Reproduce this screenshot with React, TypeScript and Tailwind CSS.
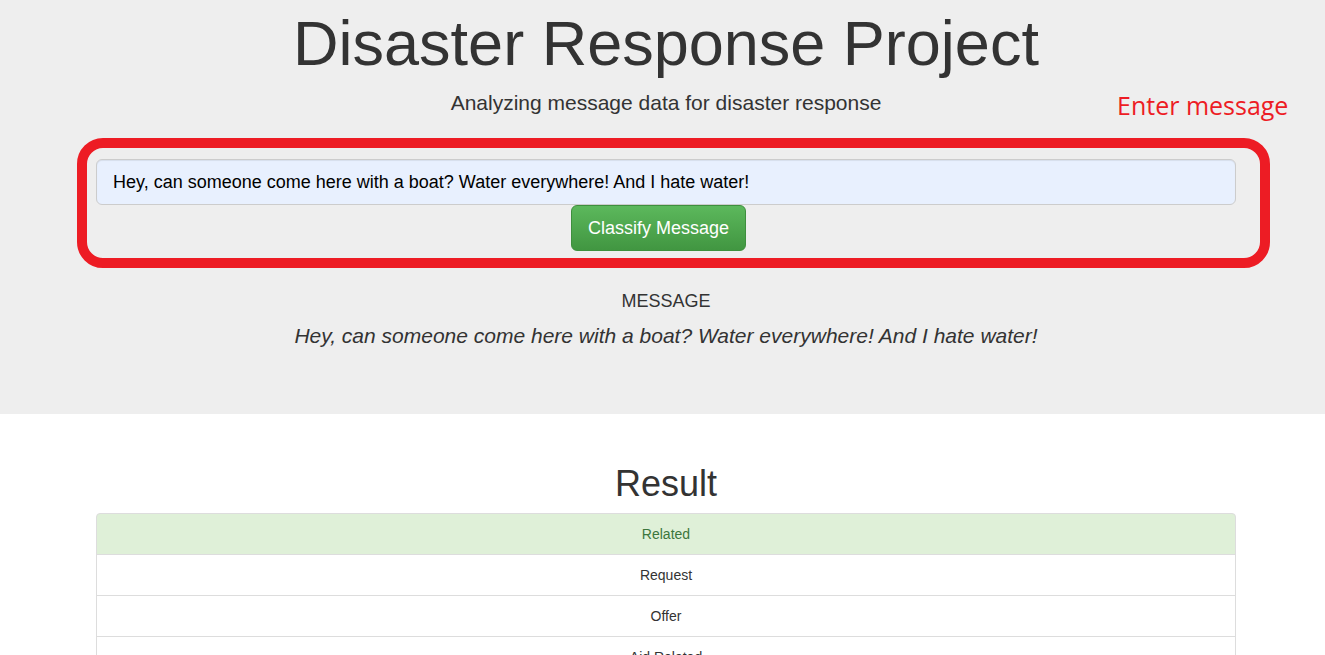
import React, { useState } from 'react';

const categories = [
  'Related',
  'Request',
  'Offer',
  'Aid Related',
  'Medical Help',
  'Medical Products',
  'Search And Rescue',
  'Security',
];

const App: React.FC = () => {
  const [message, setMessage] = useState(
    'Hey, can someone come here with a boat? Water everywhere! And I hate water!'
  );
  const matched = ['Related'];

  return (
    <div className="min-h-screen bg-white text-[#333] font-['Liberation_Sans',Arial,sans-serif]">
      {/* jumbotron */}
      <div className="bg-[#eeeeee] pb-[64px]">
        <div className="w-[1140px] ml-[96px] text-center">
          <h1 className="pt-[9px] text-[63px] leading-[69px] text-[#333]">
            Disaster Response Project
          </h1>
          <p className="mt-[10px] text-[21px] leading-[29px]">
            Analyzing message data for disaster response
          </p>

          <div className="relative mt-[42px]">
            <div className="absolute -top-[70px] left-[1021px] text-[25px] leading-[32px] text-[#ed1c24] font-['Open_Sans','Noto_Sans',sans-serif] whitespace-nowrap">
              Enter message
            </div>
            <input
              value={message}
              onChange={(e) => setMessage(e.target.value)}
              className="block w-full h-[46px] px-4 text-[18px] text-black bg-[#e8f0fe] border border-[#cccccc] rounded-[6px] shadow-[inset_0_1px_1px_rgba(0,0,0,0.075)] outline-none"
            />
            <button className="ml-[475px] block w-[175px] h-[46px] text-[18px] text-white rounded-[6px] border border-[#3e8f3e] bg-gradient-to-b from-[#5cb85c] to-[#419641]">
              Classify Message
            </button>
            <div className="pointer-events-none absolute -top-[21px] -left-[19px] w-[1193px] h-[130px] border-[10px] border-[#ed1c24] rounded-[26px]" />
          </div>

          <h4 className="mt-[40px] text-[18px] leading-[20px]">MESSAGE</h4>
          <p className="mt-[10px] text-[21px] leading-[29px] italic">{message}</p>
        </div>
      </div>

      {/* results */}
      <div className="w-[1140px] ml-[96px] text-center">
        <h1 className="mt-[50px] text-[36px] leading-[40px]">Result</h1>
        <ul className="mt-[9px]">
          {categories.map((c, i) => {
            const hit = matched.includes(c);
            return (
              <li
                key={c}
                className={`py-[10px] text-[14px] leading-[20px] border border-[#dddddd] ${
                  i > 0 ? '-mt-px' : 'rounded-t-[4px]'
                } ${hit ? 'bg-[#dff0d8] text-[#3c763d]' : 'bg-white text-[#333]'}`}
              >
                {c}
              </li>
            );
          })}
        </ul>
      </div>
    </div>
  );
};

export default App;
